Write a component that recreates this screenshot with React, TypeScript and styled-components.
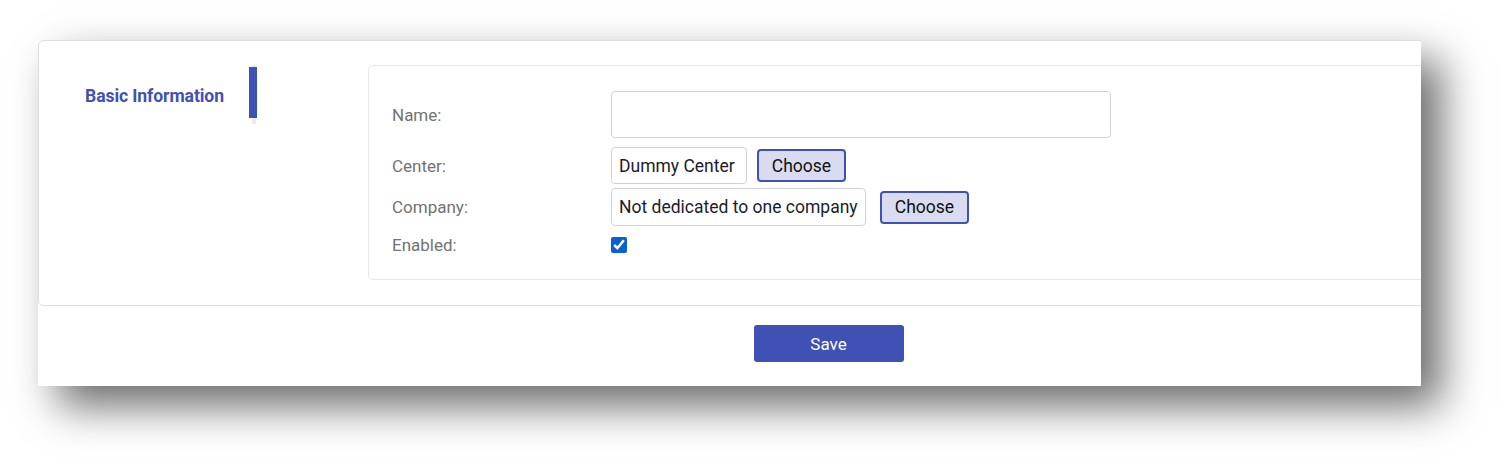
import React from "react";
import styled, { createGlobalStyle } from "styled-components";

const GlobalStyle = createGlobalStyle`
  body {
    margin: 0;
    background: #ffffff;
    font-family: Roboto, "Liberation Sans", sans-serif;
  }
`;

const Page = styled.div`
  padding: 40px 0 0 38px;
  height: 475px;
  box-sizing: border-box;
`;

const Window = styled.div`
  width: 1383px;
  height: 346px;
  overflow: hidden;
  background: #ffffff;
  box-shadow: 20px 20px 40px rgba(0, 0, 0, 0.58);
`;

const Sheet = styled.div`
  width: 1581px;
`;

const Card = styled.section`
  display: flex;
  height: 266px;
  box-sizing: border-box;
  border: 1px solid #e0e0e3;
  border-radius: 5px;
  padding: 24px 0 24px 0;
`;

const TabList = styled.nav`
  position: relative;
  width: 218px;
  align-self: flex-start;
  padding: 2px 0 6px;

  &::before {
    content: "";
    position: absolute;
    top: 0;
    bottom: 0;
    right: 1px;
    width: 4px;
    background: #ebebf2;
  }
`;

const Tab = styled.div<{ $active?: boolean }>`
  position: relative;
  display: grid;
  grid-template-columns: 1fr 8px;
  height: 51px;
  padding-left: 46px;
  color: #3f51b5;
  font-size: 17.6px;
  font-weight: 700;
  letter-spacing: -0.1px;

  span {
    padding-top: 19px;
  }

  &::after {
    content: "";
    position: relative;
    background: ${(p) => (p.$active ? "#3f51b5" : "transparent")};
  }
`;

const Panel = styled.div`
  flex: 1;
  margin-left: 111px;
  height: 215px;
  box-sizing: border-box;
  border: 1px solid #e6e6ee;
  border-radius: 5px;
  padding: 25px 23px 24px;
`;

const Form = styled.div`
  display: grid;
  grid-template-columns: 219px 1fr;
  align-items: center;
`;

const Label = styled.label<{ $top: number }>`
  margin-top: ${(p) => p.$top}px;
  color: #727272;
  font-size: 17px;
`;

const Field = styled.div<{ $top: number }>`
  display: flex;
  align-items: center;
  margin-top: ${(p) => p.$top}px;
`;

const TextBox = styled.input<{ $w: number; $h: number }>`
  width: ${(p) => p.$w}px;
  height: ${(p) => p.$h}px;
  box-sizing: border-box;
  border: 1px solid #cfd2d8;
  border-radius: 4px;
  padding: 0 7px;
  font-family: Roboto, "Liberation Sans", sans-serif;
  font-size: 17.5px;
  color: #1c1c28;
  background: #ffffff;
  outline: none;
`;

const ChooseButton = styled.button<{ $gap: number }>`
  margin-left: ${(p) => p.$gap}px;
  width: 89px;
  height: 33px;
  box-sizing: border-box;
  border: 2px solid #3f51b5;
  border-radius: 4px;
  background: #d9dcf0;
  font-family: Roboto, "Liberation Sans", sans-serif;
  font-size: 17.5px;
  color: #111111;
  padding: 0;
`;

const Check = styled.input`
  width: 16px;
  height: 16px;
  margin: 0;
  accent-color: #0b5fd6;
`;

const Footer = styled.div`
  display: flex;
  justify-content: center;
  padding-top: 19px;
`;

const SaveButton = styled.button`
  width: 150px;
  height: 37px;
  border: none;
  border-radius: 3px;
  background: #3f51b5;
  color: #ffffff;
  font-family: Roboto, "Liberation Sans", sans-serif;
  font-size: 17px;
`;

export default function App() {
  return (
    <>
      <GlobalStyle />
      <Page>
        <Window>
          <Sheet>
            <Card>
              <TabList>
                <Tab $active>
                  <span>Basic Information</span>
                </Tab>
              </TabList>
              <Panel>
                <Form>
                  <Label $top={0}>Name:</Label>
                  <Field $top={0}>
                    <TextBox $w={500} $h={47} defaultValue="" />
                  </Field>
                  <Label $top={9}>Center:</Label>
                  <Field $top={9}>
                    <TextBox $w={136} $h={37} defaultValue="Dummy Center" readOnly />
                    <ChooseButton $gap={10}>Choose</ChooseButton>
                  </Field>
                  <Label $top={4}>Company:</Label>
                  <Field $top={4}>
                    <TextBox $w={255} $h={38} defaultValue="Not dedicated to one company" readOnly />
                    <ChooseButton $gap={14}>Choose</ChooseButton>
                  </Field>
                  <Label $top={9}>Enabled:</Label>
                  <Field $top={9}>
                    <Check type="checkbox" defaultChecked />
                  </Field>
                </Form>
              </Panel>
            </Card>
            <Footer>
              <SaveButton>Save</SaveButton>
            </Footer>
          </Sheet>
        </Window>
      </Page>
    </>
  );
}
